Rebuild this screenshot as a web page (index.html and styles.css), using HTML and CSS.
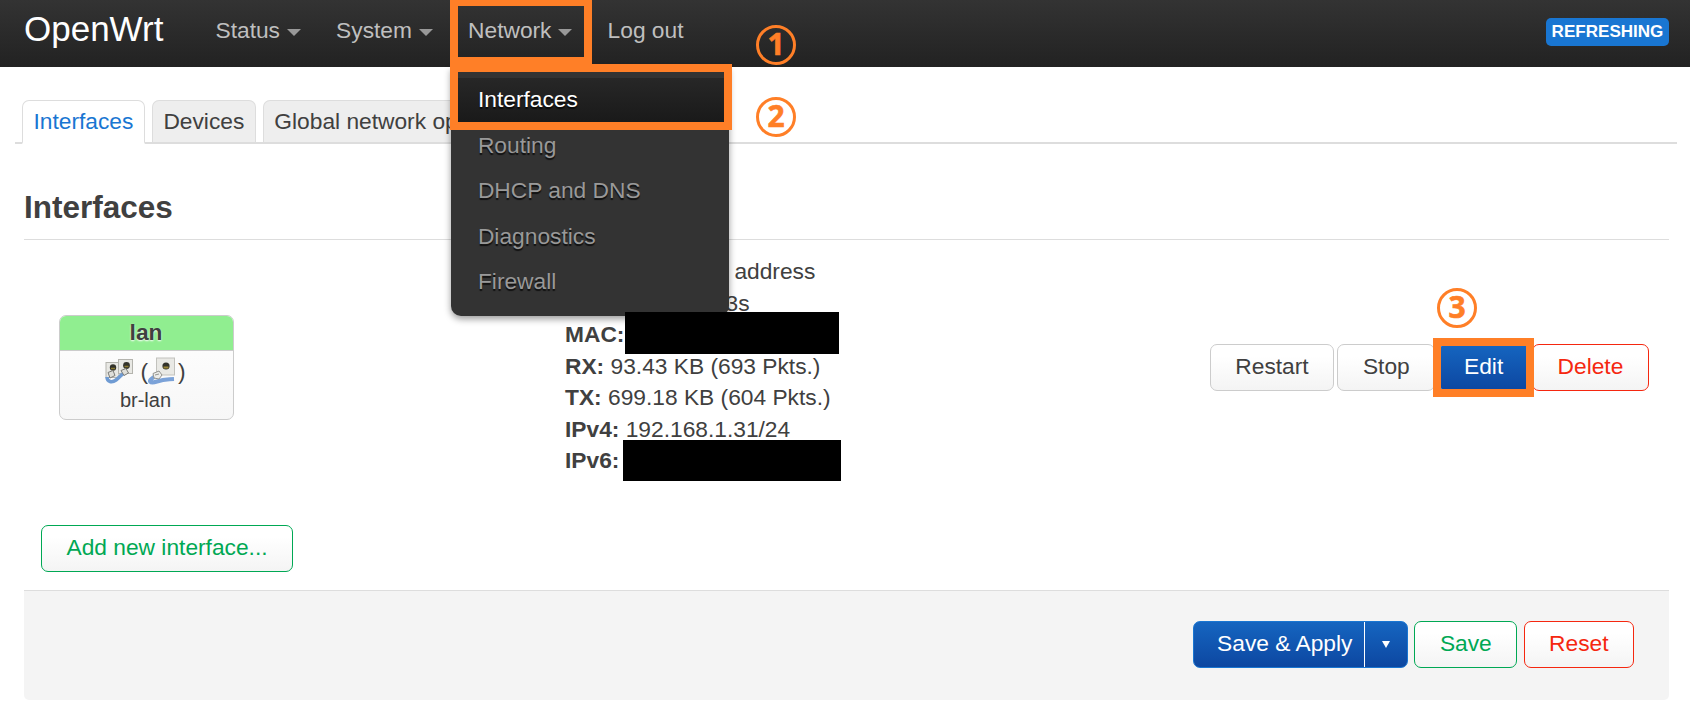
FILE: index.html
```html
<!DOCTYPE html>
<html lang="en">
<head>
<meta charset="utf-8">
<title>OpenWrt - Interfaces</title>
<link rel="stylesheet" href="styles.css">
</head>
<body>
<header class="topbar">
  <a class="brand">OpenWrt</a>
  <nav class="nav">
    <a class="nav-item">Status<i class="caret"></i></a>
    <a class="nav-item">System<i class="caret"></i></a>
    <div class="nav-item">Network<i class="caret"></i>
      <div class="dropdown">
        <a class="active">Interfaces</a>
        <a>Routing</a>
        <a>DHCP and DNS</a>
        <a>Diagnostics</a>
        <a>Firewall</a>
      </div>
    </div>
    <a class="nav-item">Log out</a>
  </nav>
  <span class="badge">REFRESHING</span>
</header>
<main>
  <div class="tabs">
    <a class="tab selected">Interfaces</a>
    <a class="tab">Devices</a>
    <a class="tab">Global network options</a>
  </div>
  <h2>Interfaces</h2>
  <section class="row">
    <div class="zone">
      <div class="zone-head">lan</div>
      <div class="zone-body">
        <div class="ports">
          <svg width="28" height="26" viewBox="0 0 28 26">
            <g stroke="#b4b4ae" fill="#e8e8e4"><rect x="1" y="4.500" width="13" height="15"/><rect x="13.500" y="1.500" width="14" height="14"/></g>
            <g fill="#33332b"><circle cx="8" cy="9.500" r="3.200"/><circle cx="21.500" cy="7.500" r="3.400"/></g>
            <path d="M6 10.500h4M19.500 8.500h4" stroke="#8b7b31" stroke-width="1.500"/>
            <path d="M2 19c0 5 5 6 9 3s5-6 9-7" fill="none" stroke="#6f9bd3" stroke-width="3.500"/>
            <g fill="#deded9" stroke="#7c7c78"><path d="M3 14.500l5-2 2 5-5 2.500zM16 12.500l5-2 2.500 4.500-4.500 2.500z"/></g>
          </svg>
          <span class="paren">(</span>
          <svg width="28" height="28" viewBox="0 0 28 28">
            <rect x="8.500" y="1" width="18" height="17" fill="#e9e9e5" stroke="#c2c2bd"/>
            <circle cx="18" cy="9" r="3.600" fill="#33332b"/>
            <path d="M15.500 10.500h5" stroke="#9b8737" stroke-width="1.800"/>
            <path d="M6 20c-7 4-4 7 3 4.500s8-2 17-2.500" fill="none" stroke="#7ba2d8" stroke-width="4"/>
            <path d="M5 16.500l6-2.500 3 4-3 4-5-1z" fill="#ededea" stroke="#94948f"/>
            <path d="M7 18l4-1" stroke="#94948f"/>
          </svg>
          <span class="paren">)</span>
        </div>
        <div class="device">br-lan</div>
      </div>
    </div>
    <div class="details">
      <div><b>Protocol:</b> Static address</div>
      <div><b>Uptime:</b> 0h 3m 3s</div>
      <div class="line"><b>MAC:</b><i class="mask mac"></i></div>
      <div><b>RX:</b> 93.43 KB (693 Pkts.)</div>
      <div><b>TX:</b> 699.18 KB (604 Pkts.)</div>
      <div><b>IPv4:</b> 192.168.1.31/24</div>
      <div class="line"><b>IPv6:</b><i class="mask ipv6"></i></div>
    </div>
    <div class="actions">
      <button class="btn">Restart</button>
      <button class="btn">Stop</button>
      <button class="btn primary">Edit</button>
      <button class="btn negative">Delete</button>
    </div>
  </section>
  <div class="add"><button class="btn positive">Add new interface...</button></div>
  <footer class="page-actions">
    <div class="split"><span class="split-label">Save &amp; Apply</span><span class="split-open"><i></i></span></div>
    <button class="btn positive">Save</button>
    <button class="btn negative">Reset</button>
  </footer>
</main>
<div class="frame frame-network"></div>
<div class="frame frame-interfaces"></div>
<div class="frame frame-edit"></div>
<div class="step step-1">1</div>
<div class="step step-2">2</div>
<div class="step step-3">3</div>
</body>
</html>
```
FILE: styles.css
```css
* { box-sizing: border-box; }
body {
  margin: 0;
  height: 703px;
  overflow: hidden;
  position: relative;
  background: #fff;
  color: #404040;
  font: 22.75px/31.5px "Liberation Sans", Arial, sans-serif;
}
.topbar {
  height: 67px;
  padding: 0 21px 0 24px;
  display: flex;
  align-items: flex-start;
  background: linear-gradient(#333, #222);
}
.brand {
  width: 174px;
  padding-top: 11px;
  color: #fff;
  font-size: 35px;
  line-height: 35px;
}
.nav { display: flex; flex: 1; }
.nav-item {
  position: relative;
  display: flex;
  align-items: center;
  height: 67px;
  padding: 0 17.5px 5px;
  color: #bfbfbf;
  white-space: nowrap;
}
.caret {
  margin: 3px 0 0 6.8px;
  border: 7px solid transparent;
  border-top-color: #999;
  border-bottom: 0;
}
.nav-item:nth-child(n+2) { margin-left: .3px; }
.dropdown {
  position: absolute;
  z-index: 2;
  top: 67px;
  left: .4px;
  width: 278px;
  height: 249px;
  padding: 11px 0 10px;
  background: #333;
  border-radius: 0 0 10px 10px;
  box-shadow: 0 3px 7px rgba(0, 0, 0, .4);
}
.dropdown a {
  display: block;
  height: 45.5px;
  padding: 6px 27px 8px;
  color: #999;
  text-shadow: 0 2px 1px rgba(0, 0, 0, .7);
}
.dropdown .active {
  color: #fff;
  background: linear-gradient(#272727, #191919);
}
.badge {
  margin-top: 18px;
  width: 123px;
  height: 28px;
  border-radius: 5px;
  background: #1976d2;
  color: #fff;
  font-size: 17.06px;
  font-weight: bold;
  line-height: 28px;
  text-align: center;
}
main { padding: 33px 21px 0 24px; }
.tabs {
  display: flex;
  gap: 7px;
  height: 44px;
  margin: 0 -8px 0 -9px;
  padding-left: 7px;
  background: linear-gradient(#ddd, #ddd) bottom / 100% 2px no-repeat;
}
.tab {
  height: 44px;
  padding: 5px 10.5px 0;
  border: 1px solid #ddd;
  border-bottom: 2px solid #ddd;
  border-radius: 7px 7px 0 0;
  background: #eee;
}
.selected {
  color: #1976d2;
  background: #fff;
  border-bottom-color: #fff;
}
h2 {
  height: 96px;
  margin: 0;
  padding-top: 43.5px;
  border-bottom: 1px solid #ddd;
  font-size: 31.5px;
  line-height: 38px;
}
.row {
  display: grid;
  grid-template-columns: 506px 1fr auto;
  align-items: center;
  height: 255px;
  padding: 0 20.2px 0 35px;
}
.zone {
  width: 175px;
  height: 105px;
  border: 1px solid #ccc;
  border-radius: 7px;
  overflow: hidden;
  text-align: center;
  background: linear-gradient(#fff, #f7f7f7);
}
.zone-head {
  height: 35px;
  padding-right: 1px;
  border-bottom: 1px solid #ccc;
  background: #90ee90;
  font-weight: bold;
  line-height: 32px;
  text-shadow: 0 1px 2px #fff;
}
.zone-body { padding-right: 2px; font-size: 20px; }
.ports {
  display: flex;
  justify-content: center;
  align-items: center;
  height: 36px;
  padding-top: 3px;
}
.paren { font-size: 22.75px; line-height: 28px; }
.ports svg + .paren { margin-left: 2px; }
.ports .paren:nth-child(2) { margin-left: 7px; }
.device { line-height: 26px; }
.details { padding-bottom: 2px; white-space: nowrap; }
.line { display: flex; height: 31.5px; }
.mask { background: #000; flex: none; }
.mac { position: relative; z-index: 3; width: 214px; height: 42px; margin: -7.500px 0 0 1px; }
.ipv6 { position: relative; width: 218px; height: 41px; margin: -5.500px 0 0 4px; }
.actions { display: flex; gap: 3.3px; }
.btn {
  height: 47px;
  padding: 0 24.5px 1px;
  border: 1px solid #ccc;
  border-radius: 7px;
  background: linear-gradient(#fff 25%, #f4f4f4);
  color: #404040;
  font: inherit;
  white-space: nowrap;
}
.primary {
  color: #fff;
  border-color: #1976d2;
  background: linear-gradient(#1565c0, #0d47a1);
}
.positive { color: #00a854; border-color: #00a854; }
.negative { color: #f5270f; border-color: #f5270f; }
.add { height: 95px; padding: 30px 0 0 17px; }
.page-actions {
  display: flex;
  justify-content: flex-end;
  gap: 6.3px;
  height: 110px;
  padding: 30px 35px 0 0;
  border-top: 1px solid #ddd;
  border-radius: 0 0 5px 5px;
  background: #f4f4f4;
}
.split {
  display: flex;
  width: 215px;
  height: 47px;
  border: 1px solid #1976d2;
  border-radius: 7px;
  background: linear-gradient(#1565c0, #0d47a1);
  color: #fff;
  line-height: 43px;
}
.split-label { width: 171px; padding-left: 23px; border-right: 1px solid #fff; }
.split-open { flex: 1; display: flex; align-items: center; justify-content: center; }
.split-open i { border: 4px solid transparent; border-top: 7px solid #fff; border-bottom: 0; }
.frame { position: absolute; z-index: 4; border: 8px solid #ff7f27; }
.frame-network { left: 450px; top: -2px; width: 142px; height: 67px; }
.frame-interfaces { left: 450px; top: 64px; width: 282px; height: 66px; }
.frame-edit { left: 1433px; top: 338px; width: 101px; height: 59px; }
.step {
  position: absolute;
  z-index: 4;
  width: 40px;
  height: 40px;
  border: 3px solid #ff7f27;
  border-radius: 50%;
  color: #ff7f27;
  font: bold 30px/32px "Open Sans", sans-serif;
  -webkit-text-stroke: .6px #ff7f27;
  text-align: center;
}
.step-1 { left: 756px; top: 24.500px; }
.step-2 { left: 756px; top: 96.500px; }
.step-3 { left: 1437px; top: 287.500px; }
```
